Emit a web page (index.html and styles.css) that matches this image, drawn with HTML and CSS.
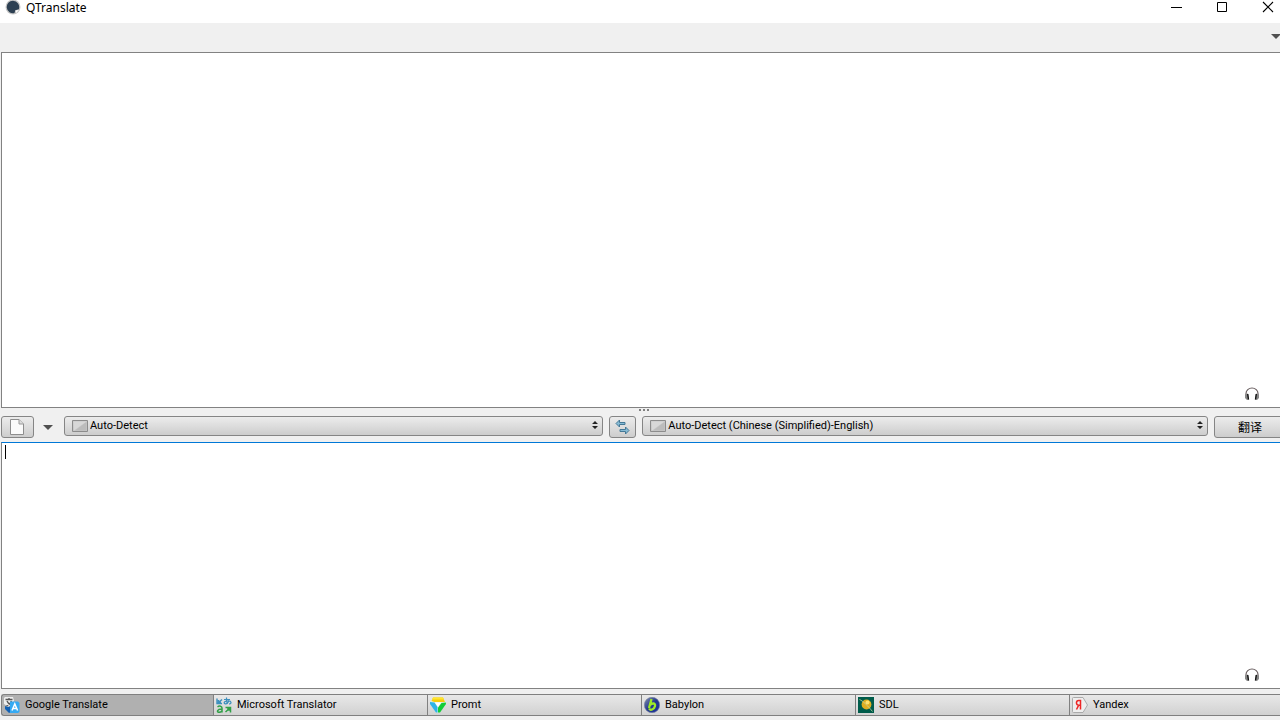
FILE: index.html
```html
<!DOCTYPE html>
<html lang="en">
<head>
<meta charset="utf-8">
<title>QTranslate</title>
<link rel="stylesheet" href="styles.css">
</head>
<body>
<header class="titlebar">
  <svg class="app-icon" width="16" height="16" viewBox="0 0 16 16"><circle cx="8" cy="7" r="7.500" fill="#c6c6c6"/><path d="M8 .8a6.200 6.200 0 1 0 1.500 12.200l.8-2.800 3.500-.9A6.300 6.300 0 0 0 8 .8z" fill="#2d4052"/><path d="M10.500 10.500l3.300-.6-2.600 3.200z" fill="#fff"/></svg>
  <h1 class="title">QTranslate</h1>
  <div class="window-controls">
    <button class="window-button" aria-label="Minimize"><svg width="12" height="12" viewBox="0 0 12 12"><path d="M1 6.500h11" stroke="#000"/></svg></button>
    <button class="window-button" aria-label="Maximize"><svg width="12" height="12" viewBox="0 0 12 12"><path d="M1.500 1.500h9v9h-9z" fill="none" stroke="#000"/></svg></button>
    <button class="window-button" aria-label="Close"><svg width="12" height="12" viewBox="0 0 12 12"><path d="M1 1l10 10M11 1L1 11" stroke="#000" stroke-width="1.100"/></svg></button>
  </div>
</header>
<div class="toolbar">
  <button class="menu-button" aria-label="Toolbar menu"><svg width="10" height="6" viewBox="0 0 10 6"><path d="M0 0h10L5 5z" fill="#505050"/></svg></button>
</div>
<main class="workspace">
  <section class="pane pane-result">
    <textarea class="editor" aria-label="Translation" readonly></textarea>
    <button class="listen" aria-label="Listen to translation"><svg width="16" height="14" viewBox="0 0 16 14"><path d="M2 9V6.500a6 5.500 0 0 1 12 0V9" fill="none" stroke="#6b6062" stroke-width="1.200"/><path d="M1 7.500l3-1 1 6-2 .5-2-2zM15 7.500l-3-1-1 6 2 .5 2-2z" fill="#888"/><path d="M3.700 7l.8 5.500M12.300 7l-.8 5.500" stroke="#111" stroke-width="1.400"/></svg></button>
  </section>
  <div class="splitter"><svg width="10" height="2" viewBox="0 0 10 2"><path d="M0 0h2v2H0zM4 0h2v2H4zM8 0h2v2H8z" fill="#808080"/></svg></div>
  <div class="controls">
    <button class="push clear" aria-label="Clear"><svg width="14" height="16" viewBox="0 0 14 16"><path d="M.5.5h8.500l4.500 4.500v10.500H.5z" fill="#fafafa" stroke="#8d8d8d"/><path d="M9 .5V5h4.500" fill="#ddd" stroke="#999"/></svg></button>
    <button class="history" aria-label="History"><svg width="10" height="5" viewBox="0 0 10 5"><path d="M0 0h10L5 5z" fill="#505050"/></svg></button>
    <div class="combo combo-source">
      <svg class="flag" width="16" height="12" viewBox="0 0 16 12"><path d="M.5.5h15v11H.5z" fill="#c8c8c8" stroke="#8c8c8c"/><path d="M1.500 1.500h13L2 10.500z" fill="#d8d8d8"/><path d="M14.500 2v8.500H3z" fill="#bcbcbc"/></svg>
      <select class="combo-select" aria-label="Source language"><option>Auto-Detect</option></select>
      <svg class="arrows" width="6" height="10" viewBox="0 0 6 10"><path d="M3 0l3 3H0zM0 5h6L3 8z" fill="#222"/></svg>
    </div>
    <button class="push swap" aria-label="Swap languages"><svg width="16" height="16" viewBox="0 0 16 16"><path d="M4.500 1v2.500H10v2H4.500V8L1 4.500zM10.500 8v2.500H5v2h5.500V15l3.500-3.500z" fill="#86bad4" stroke="#447896"/></svg></button>
    <div class="combo combo-target">
      <svg class="flag" width="16" height="12" viewBox="0 0 16 12"><path d="M.5.5h15v11H.5z" fill="#c8c8c8" stroke="#8c8c8c"/><path d="M1.500 1.500h13L2 10.500z" fill="#d8d8d8"/><path d="M14.500 2v8.500H3z" fill="#bcbcbc"/></svg>
      <select class="combo-select" aria-label="Target language"><option>Auto-Detect (Chinese (Simplified)-English)</option></select>
      <svg class="arrows" width="6" height="10" viewBox="0 0 6 10"><path d="M3 0l3 3H0zM0 5h6L3 8z" fill="#222"/></svg>
    </div>
    <button class="push translate" lang="zh">翻译</button>
  </div>
  <section class="pane pane-source">
    <textarea class="editor editor-active" aria-label="Source text"></textarea>
    <span class="caret"></span>
    <button class="listen" aria-label="Listen to source"><svg width="16" height="14" viewBox="0 0 16 14"><path d="M2 9V6.500a6 5.500 0 0 1 12 0V9" fill="none" stroke="#6b6062" stroke-width="1.200"/><path d="M1 7.500l3-1 1 6-2 .5-2-2zM15 7.500l-3-1-1 6 2 .5 2-2z" fill="#888"/><path d="M3.700 7l.8 5.500M12.300 7l-.8 5.500" stroke="#111" stroke-width="1.400"/></svg></button>
  </section>
</main>
<nav class="services">
  <button class="service service-active"><svg width="16" height="16" viewBox="0 0 16 16"><path d="M0 1l1-1h8l1 4-5 6-5-3z" fill="#eee"/><path d="M1.500 2.500h7M5 1v2M3 4c1 3 3 4 5 5M7.500 4c-1 3-3 4-5 5" fill="none" stroke="#555" stroke-width="1.300"/><path d="M1 9l3 1 3-1v6l-2 1-4-4z" fill="#1261b4"/><path d="M6 4.500h8l1.500 1.500v9L14 16H6z" fill="#36aaf3"/><path d="M8 13.500L10.800 7l2.800 6.500M9 11.500h3.500" fill="none" stroke="#fff" stroke-width="1.500"/></svg>Google Translate</button>
  <button class="service"><svg width="16" height="16" viewBox="0 0 16 16"><path d="M1 1.500v5h5M1.500 6.500L6 2.500M2.500 3v2.500H5" fill="none" stroke="#3c8fbd" stroke-width="1.400"/><path d="M8 2.500h6M10.500.5c-.3 3 0 4.500 1 6.500M13 3.500C12 6.500 8.500 8 8.200 5.800 8 4 14.500 3 15 5.300 15.300 6.500 14 7 13 7" fill="none" stroke="#3c8fbd" stroke-width="1.200"/><path d="M1.500 9.800c2-1.300 4.500-.8 4.500 1.200v4.500M6 12c-5-.2-5.500 3.300-3 3.300 1.300 0 2.500-.5 3-1.500" fill="none" stroke="#30a047" stroke-width="1.500"/><path d="M9.500 10.500h5v5M14.500 10.500l-5 4.500M12 10.500v2.500h2.500" fill="none" stroke="#30a047" stroke-width="1.500"/></svg>Microsoft Translator</button>
  <button class="service"><svg width="16" height="16" viewBox="0 0 16 16"><path d="M3 1h10l3 4.500L9.500 15.500h-3L0 5.500z" fill="#d9eee8"/><path d="M3 .5h10l2 4.500H4.500L1.500 4z" fill="#f5cb0b"/><path d="M0 5l4.500.5L7.500 10v5.500H6L0 7z" fill="#2eb3e8"/><path d="M15.800 5.500L11.500 6 8 10.500v5h2L16 7z" fill="#13cd37"/><path d="M5 5.500h6L8 10z" fill="#fff"/><path d="M3 .5h10l1 2H2z" fill="#ffe52f"/></svg>Promt</button>
  <button class="service"><svg width="16" height="16" viewBox="0 0 16 16"><defs><linearGradient id="ball" x1="0" y1="0" x2="1" y2="1"><stop offset="0" stop-color="#8590b0"/><stop offset=".5" stop-color="#23388c"/><stop offset="1" stop-color="#1c2fa0"/></linearGradient></defs><circle cx="8" cy="8" r="7.700" fill="url(#ball)" stroke="#76819c" stroke-width=".6"/><path d="M7.500 2L5 11M5.500 8.500C7.500 5.500 11.800 6 11 9c-.7 3.500-5 5-5.800 2.500" fill="none" stroke="#9eea27" stroke-width="2.300"/></svg>Babylon</button>
  <button class="service"><svg width="16" height="16" viewBox="0 0 16 16"><path d="M0 0h16v16H0z" fill="#005c4b"/><circle cx="8.500" cy="7.500" r="4.900" fill="#dfae20"/><circle cx="9.500" cy="5.500" r="2" fill="#ffe16b"/><path d="M1.500 2.500C5 4 10 9 14.500 14.500" fill="none" stroke="#c6d7a5" stroke-width=".8"/></svg>SDL</button>
  <button class="service"><svg width="16" height="16" viewBox="0 0 16 16"><path d="M.5 1.500q0-1 1-1H11L15.500 8 11 15.500H1.500q-1 0-1-1z" fill="#eee" stroke="#aaa"/><path d="M8.500 12.500v-9H6.700C3.700 3.500 3.700 8.200 6.700 8.200h1.800M6.700 8.200L4.500 12.500" fill="none" stroke="#ed2525" stroke-width="1.500"/></svg>Yandex</button>
</nav>
</body>
</html>
```
FILE: styles.css
```css
* {
  box-sizing: border-box;
}

body {
  display: flex;
  flex-direction: column;
  height: 100vh;
  margin: 0;
  overflow: hidden;
  background: #f0f0f0;
  color: #000;
  font: 11px/14px Roboto, "Noto Sans CJK SC", sans-serif;
}

button,
select,
textarea {
  margin: 0;
  padding: 0;
  border: 0;
  border-radius: 0;
  background: none;
  color: inherit;
  font: inherit;
}

svg {
  display: block;
  flex: none;
}

.titlebar {
  display: flex;
  align-items: flex-start;
  gap: 5px;
  height: 23px;
  padding-left: 5px;
  background: #fff;
}

.title {
  flex: 1;
  margin: 0;
  font: 12px/16px "Noto Sans", sans-serif;
}

.window-controls {
  display: flex;
  gap: 34px;
  padding: 1px 6px 0 0;
}

.toolbar {
  display: flex;
  justify-content: flex-end;
  align-items: center;
  height: 29px;
  padding-bottom: 2px;
}

.menu-button {
  margin-right: -1px;
}

.workspace {
  display: flex;
  flex: 1;
  flex-direction: column;
  min-height: 0;
}

.pane {
  position: relative;
  display: flex;
  margin-left: 1px;
}

.pane-result {
  flex: 356;
}

.pane-source {
  flex: 247;
}

.editor {
  flex: 1;
  padding: 3px;
  border: 1px solid #828282;
  border-right: 0;
  background: #fff;
  resize: none;
  outline: 0;
}

.editor-active {
  border-top-color: #0078d7;
}

.caret {
  position: absolute;
  top: 3px;
  left: 4px;
  width: 1px;
  height: 14px;
  background: #000;
}

.listen {
  position: absolute;
  right: 20px;
  bottom: 7px;
}

.splitter {
  display: flex;
  justify-content: center;
  height: 8px;
  padding: 1px 0 0 8px;
}

.controls {
  display: flex;
  align-items: flex-start;
  height: 26px;
  padding-left: 1px;
}

.push,
.combo {
  display: flex;
  align-items: center;
  border: 1px solid #858585;
  border-radius: 3px;
  background: linear-gradient(#ececec, #cdcdcd);
}

.push {
  justify-content: center;
  height: 22px;
}

.clear {
  width: 33px;
  padding-right: 2px;
}

.history {
  display: flex;
  justify-content: center;
  align-items: center;
  width: 30px;
  height: 22px;
  padding-right: 2px;
}

.combo {
  height: 20px;
  padding: 0 4px 0 7px;
  gap: 2px;
}

.combo-source {
  flex: 539;
}

.combo-target {
  flex: 566;
}

.combo-select {
  flex: 1;
  min-width: 0;
  appearance: none;
  outline: 0;
}

.swap {
  width: 27px;
  margin: 0 6px;
}

.translate {
  width: 72px;
  margin: 0 -6px 0 6px;
  font: 12px/16px "Noto Sans CJK SC", sans-serif;
}

.services {
  display: grid;
  grid-template-columns: repeat(6, 1fr);
  margin: 5px -3px 4px -1px;
}

.service {
  display: flex;
  align-items: center;
  gap: 5px;
  height: 22px;
  padding-left: 2px;
  border: 1px solid #808080;
  border-right: 0;
  background: linear-gradient(#e8e8e8, #d1d1d1);
}

.service:first-child {
  margin-left: 2px;
  border-radius: 3px 0 0 3px;
}

.service-active {
  background: #b0b0b0;
}
```
